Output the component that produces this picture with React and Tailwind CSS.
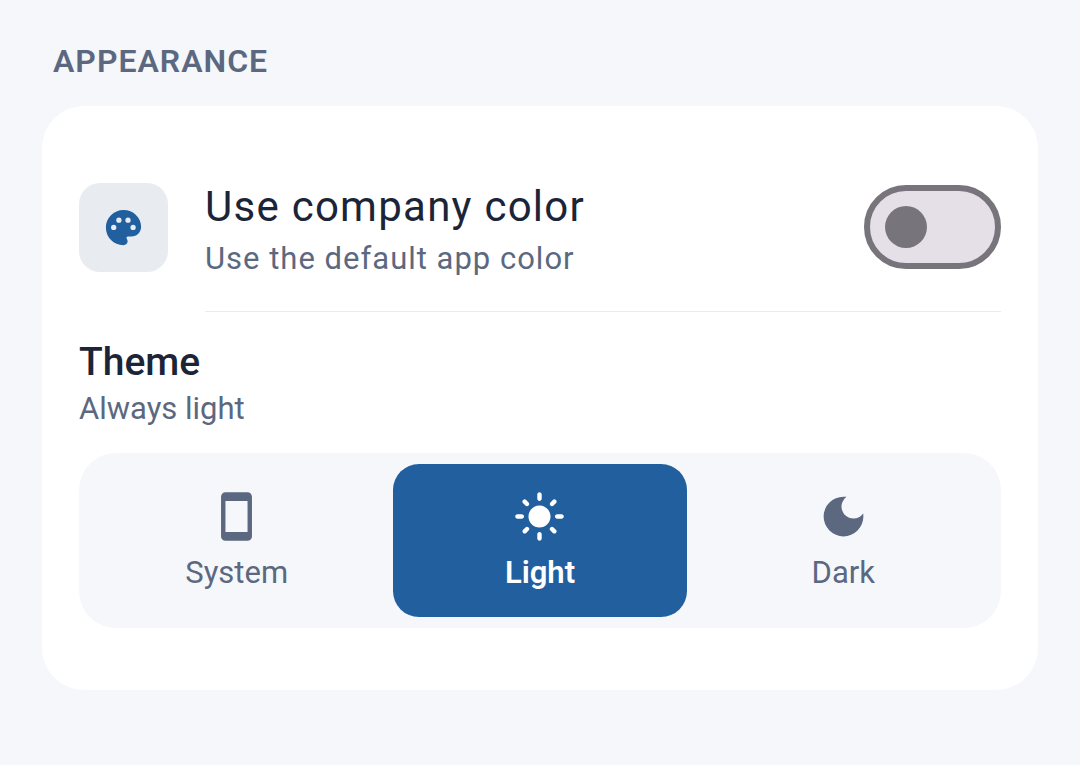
import { useState } from "react";
import { MdDarkMode, MdLightMode, MdSmartphone } from "react-icons/md";

const themes = [
  { id: "system", label: "System", Icon: MdSmartphone },
  { id: "light", label: "Light", Icon: MdLightMode },
  { id: "dark", label: "Dark", Icon: MdDarkMode },
];

const descriptions = {
  system: "Follow system",
  light: "Always light",
  dark: "Always dark",
};

function PaletteIcon() {
  return (
    <svg viewBox="0 0 24 24" className="size-[47px] fill-[#215f9f]" aria-hidden="true">
      <path
        fillRule="evenodd"
        d="M12 3C7 3 3 7 3 12s4 9 9 9c1.2 0 2.100-.9 2.100-2 0-.5-.2-.9-.4-1.300-.4-.5-.1-1.100.6-1.100H16c2.800 0 5-2.200 5-5C21 6.800 17 3 12 3z
          M7 10.600a1.350 1.350 0 1 0 0 2.700 1.350 1.350 0 0 0 0-2.700z
          M9.650 6.900a1.350 1.350 0 1 0 0 2.700 1.350 1.350 0 0 0 0-2.700z
          M14.300 6.900a1.350 1.350 0 1 0 0 2.700 1.350 1.350 0 0 0 0-2.700z
          M16.900 10.600a1.350 1.350 0 1 0 0 2.700 1.350 1.350 0 0 0 0-2.700z"
      />
    </svg>
  );
}

export default function App() {
  const [theme, setTheme] = useState("light");
  const [companyColor, setCompanyColor] = useState(false);

  return (
    <main className="min-h-screen bg-[#f5f7fb] px-[42px] pt-10 pb-[75px] font-['Roboto',sans-serif] text-[31px] leading-[42px] text-[#5b6880]">
      <h2 className="px-[11px] text-[32px] leading-[42px] font-semibold tracking-[1px]">APPEARANCE</h2>

      <section className="mt-6 rounded-[42px] bg-white px-[37px] pt-[68px] pb-[62px]">
        <div className="flex items-center gap-[37px]">
          <div className="flex size-[89px] shrink-0 items-center justify-center rounded-[21px] bg-[#e8ecf1]">
            <PaletteIcon />
          </div>
          <label htmlFor="company-color" className="flex-1 pt-0.5">
            <span className="block text-[42px] leading-[62px] tracking-[0.03em] text-[#1b2537]">Use company color</span>
            <span className="block tracking-[1px]">Use the default app color</span>
          </label>
          <input
            id="company-color"
            type="checkbox"
            role="switch"
            checked={companyColor}
            onChange={(e) => setCompanyColor(e.target.checked)}
            className="flex h-[84px] w-[137px] shrink-0 cursor-pointer appearance-none items-center rounded-full border-[6px] border-[#78747b] bg-[#e5e0e8] px-[15px] before:size-[42px] before:rounded-full before:bg-[#78747b] checked:justify-end checked:border-[#215f9f] checked:bg-[#215f9f] checked:before:bg-white"
          />
        </div>

        <hr className="mt-[31px] ml-[126px] border-t border-[#e8ebef]" />

        <h3 className="mt-[25px] text-[39px] leading-[51px] font-medium text-[#1b2537]">Theme</h3>
        <p>{descriptions[theme]}</p>

        <div role="group" aria-label="Theme" className="mt-[23px] grid grid-cols-3 gap-[10px] rounded-[37px] bg-[#f5f7fb] p-[11px]">
          {themes.map(({ id, label, Icon }) => (
            <button
              key={id}
              type="button"
              aria-pressed={theme === id}
              onClick={() => setTheme(id)}
              className="flex cursor-pointer flex-col items-center gap-[9px] rounded-[26px] pt-[26px] pb-[23px] aria-pressed:bg-[#215f9f] aria-pressed:font-semibold aria-pressed:text-white"
            >
              <Icon className="size-[53px]" aria-hidden="true" />
              <span>{label}</span>
            </button>
          ))}
        </div>
      </section>
    </main>
  );
}
